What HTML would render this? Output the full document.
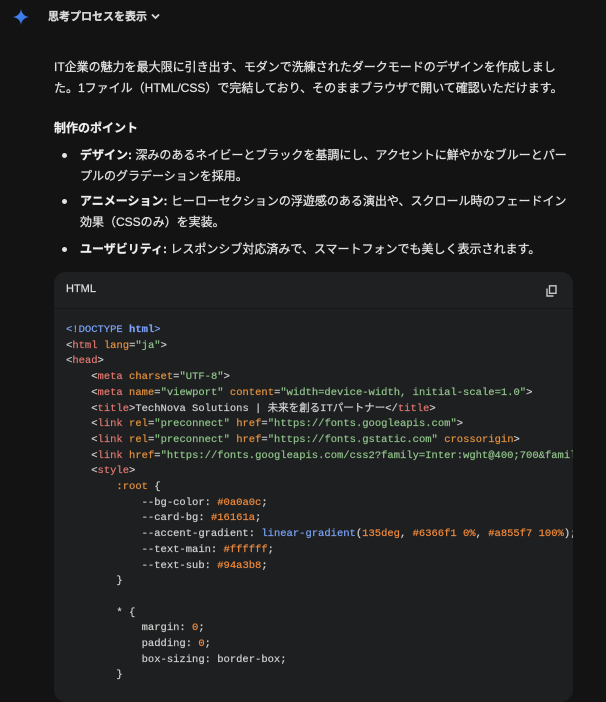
<!DOCTYPE html>
<html><head><meta charset="utf-8"><style>
body{margin:0;background:#131314;width:606px;height:691px;overflow:hidden;font-family:"Liberation Sans","Noto Sans CJK JP",sans-serif;color:#e3e3e3;position:relative}
.t{position:absolute;font-size:12px;white-space:nowrap;line-height:16px;-webkit-text-stroke:0.25px #e3e3e3}
b{font-weight:700;color:#f0f0f0}
.card{position:absolute;left:54px;top:272px;width:519px;height:430px;background:#1e1f20;border-radius:12px;overflow:hidden}
.hd{height:36px;border-bottom:1px solid #17181a;background:#1f2021}
.code{position:absolute;left:12px;top:51px;font-family:"Liberation Mono","Noto Sans CJK JP",monospace;font-size:10.5px;line-height:15.7px;white-space:pre;color:#d0d0d0;-webkit-text-stroke:0.2px}
.k{color:#7aa2f7}.tg{color:#e0776f}.a{color:#e0913f}.s{color:#8fc28a}.n{color:#f08a3c}.p{color:#c8c8c8}
.dot{position:absolute;left:62px;width:5px;height:5px;border-radius:50%;background:#e3e3e3}
</style></head><body>
<svg style="position:absolute;left:13px;top:9px" width="16" height="16" viewBox="0 0 16 16"><defs><linearGradient id="g" x1="0" y1="0" x2="1" y2="1"><stop offset="0" stop-color="#4f8cf7"/><stop offset="1" stop-color="#2a6be0"/></linearGradient></defs><path d="M8 0C8.6 4.5 11.5 7.4 16 8 11.5 8.6 8.6 11.5 8 16 7.4 11.5 4.5 8.6 0 8 4.5 7.4 7.4 4.5 8 0Z" fill="url(#g)"/></svg>
<div class="t" style="left:48px;top:9px;font-size:11px;font-weight:700;color:#d8d8d8">思考プロセスを表示</div>
<svg style="position:absolute;left:151px;top:13px" width="9" height="7" viewBox="0 0 9 7"><path d="M1 1.5L4.5 5 8 1.5" stroke="#d8d8d8" stroke-width="1.8" fill="none"/></svg>
<div class="t" style="left:54px;top:59px">IT企業の魅力を最大限に引き出す、モダンで洗練されたダークモードのデザインを作成しまし</div>
<div class="t" style="left:54px;top:80px">た。1ファイル（HTML/CSS）で完結しており、そのままブラウザで開いて確認いただけます。</div>
<div class="t" style="left:54px;top:120px"><b>制作のポイント</b></div>
<div class="dot" style="top:153px"></div>
<div class="t" style="left:80px;top:147px"><b>デザイン:</b> 深みのあるネイビーとブラックを基調にし、アクセントに鮮やかなブルーとパー</div>
<div class="t" style="left:80px;top:168px">プルのグラデーションを採用。</div>
<div class="dot" style="top:199px"></div>
<div class="t" style="left:80px;top:193px"><b>アニメーション:</b> ヒーローセクションの浮遊感のある演出や、スクロール時のフェードイン</div>
<div class="t" style="left:80px;top:214px">効果（CSSのみ）を実装。</div>
<div class="dot" style="top:247px"></div>
<div class="t" style="left:80px;top:241px"><b>ユーザビリティ:</b> レスポンシブ対応済みで、スマートフォンでも美しく表示されます。</div>
<div class="card"><div class="hd"><span style="position:absolute;left:12px;top:11px;font-size:11px;color:#e0e0e0;-webkit-text-stroke:0.2px #e0e0e0">HTML</span>
<svg style="position:absolute;left:492px;top:13px" width="11" height="12" viewBox="0 0 11 12"><rect x="3.5" y="0.8" width="6.5" height="7.5" fill="none" stroke="#c8c8c8" stroke-width="1.4"/><path d="M1 3.5V11H7.5" fill="none" stroke="#c8c8c8" stroke-width="1.4"/></svg></div>
<div class="code"><span class="k">&lt;!DOCTYPE <b style="color:#7aa2f7">html</b>&gt;</span>
<span class="p">&lt;</span><span class="tg">html</span> <span class="a">lang</span>=<span class="s">"ja"</span>&gt;
<span class="p">&lt;</span><span class="tg">head</span>&gt;
    &lt;<span class="tg">meta</span> <span class="a">charset</span>=<span class="s">"UTF-8"</span>&gt;
    &lt;<span class="tg">meta</span> <span class="a">name</span>=<span class="s">"viewport"</span> <span class="a">content</span>=<span class="s">"width=device-width, initial-scale=1.0"</span>&gt;
    &lt;<span class="tg">title</span>&gt;TechNova Solutions | 未来を創るITパートナー&lt;/<span class="tg">title</span>&gt;
    &lt;<span class="tg">link</span> <span class="a">rel</span>=<span class="s">"preconnect"</span> <span class="a">href</span>=<span class="s">"https://fonts.googleapis.com"</span>&gt;
    &lt;<span class="tg">link</span> <span class="a">rel</span>=<span class="s">"preconnect"</span> <span class="a">href</span>=<span class="s">"https://fonts.gstatic.com"</span> <span class="a">crossorigin</span>&gt;
    &lt;<span class="tg">link</span> <span class="a">href</span>=<span class="s">"https://fonts.googleapis.com/css2?family=Inter:wght@400;700&amp;family</span>
    &lt;<span class="tg">style</span>&gt;
        <span class="a">:root</span> {
            --bg-color: <span class="n">#0a0a0c</span>;
            --card-bg: <span class="n">#16161a</span>;
            --accent-gradient: <span class="k">linear-gradient</span>(<span class="n">135deg</span>, <span class="n">#6366f1 0%</span>, <span class="n">#a855f7 100%</span>);
            --text-main: <span class="n">#ffffff</span>;
            --text-sub: <span class="n">#94a3b8</span>;
        }

        * {
            margin: <span class="n">0</span>;
            padding: <span class="n">0</span>;
            box-sizing: border-box;
        }</div></div>
</body></html>
